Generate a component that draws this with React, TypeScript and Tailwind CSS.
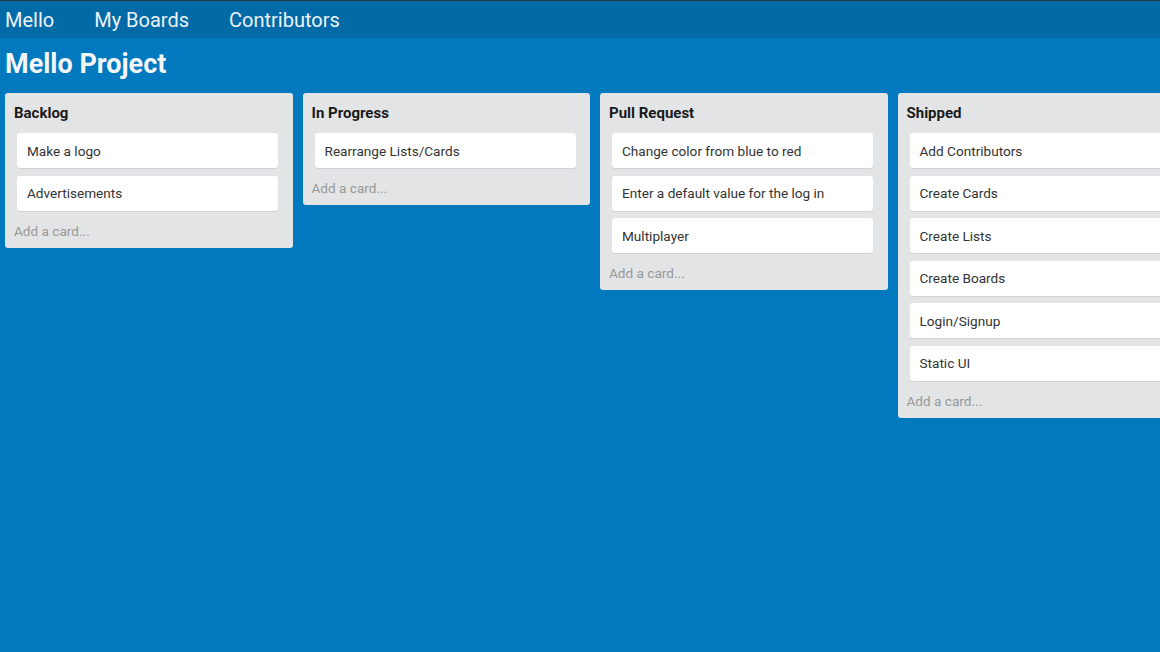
import React from "react";

const lists: { title: string; cards: string[] }[] = [
  { title: "Backlog", cards: ["Make a logo", "Advertisements"] },
  { title: "In Progress", cards: ["Rearrange Lists/Cards"] },
  {
    title: "Pull Request",
    cards: ["Change color from blue to red", "Enter a default value for the log in", "Multiplayer"],
  },
  {
    title: "Shipped",
    cards: ["Add Contributors", "Create Cards", "Create Lists", "Create Boards", "Login/Signup", "Static UI"],
  },
];

export default function App() {
  return (
    <div
      className="h-screen w-full overflow-hidden bg-[#0079bf] flex flex-col"
      style={{ fontFamily: "Roboto, 'Noto Sans', sans-serif" }}
    >
      <nav className="h-[38px] shrink-0 border-t border-[#2b3a47] bg-[#026aa7] flex items-center gap-[40px] pl-[5px] text-[20px] text-[#eef3f7]">
        <span>Mello</span>
        <span>My Boards</span>
        <span>Contributors</span>
      </nav>
      <h1 className="pt-[11px] pl-[5px] text-[27px] leading-[30px] font-bold text-[#f4f6f8]">Mello Project</h1>
      <div className="mt-[14px] flex items-start gap-[10px] pl-[5px]">
        {lists.map((l) => (
          <div key={l.title} className="w-[287.5px] shrink-0 rounded-[3px] bg-[#e2e4e6] pt-[10px] pb-[7px]">
            <div className="pl-[9px] text-[15px] leading-[20px] font-bold text-[#1a1a1a]">{l.title}</div>
            <div className="mt-[10px] flex flex-col gap-[7.5px]">
              {l.cards.map((c) => (
                <div
                  key={c}
                  className="ml-[12px] w-[261px] h-[35px] flex items-center rounded-[3px] bg-white pl-[10px] pt-[1px] text-[13.6px] text-[#333] shadow-[0_1px_0_#d0d3d6]"
                >
                  {c}
                </div>
              ))}
            </div>
            <div className="mt-[10px] pl-[9px] text-[13.6px] leading-[20px] text-[#999]">Add a card...</div>
          </div>
        ))}
      </div>
    </div>
  );
}
